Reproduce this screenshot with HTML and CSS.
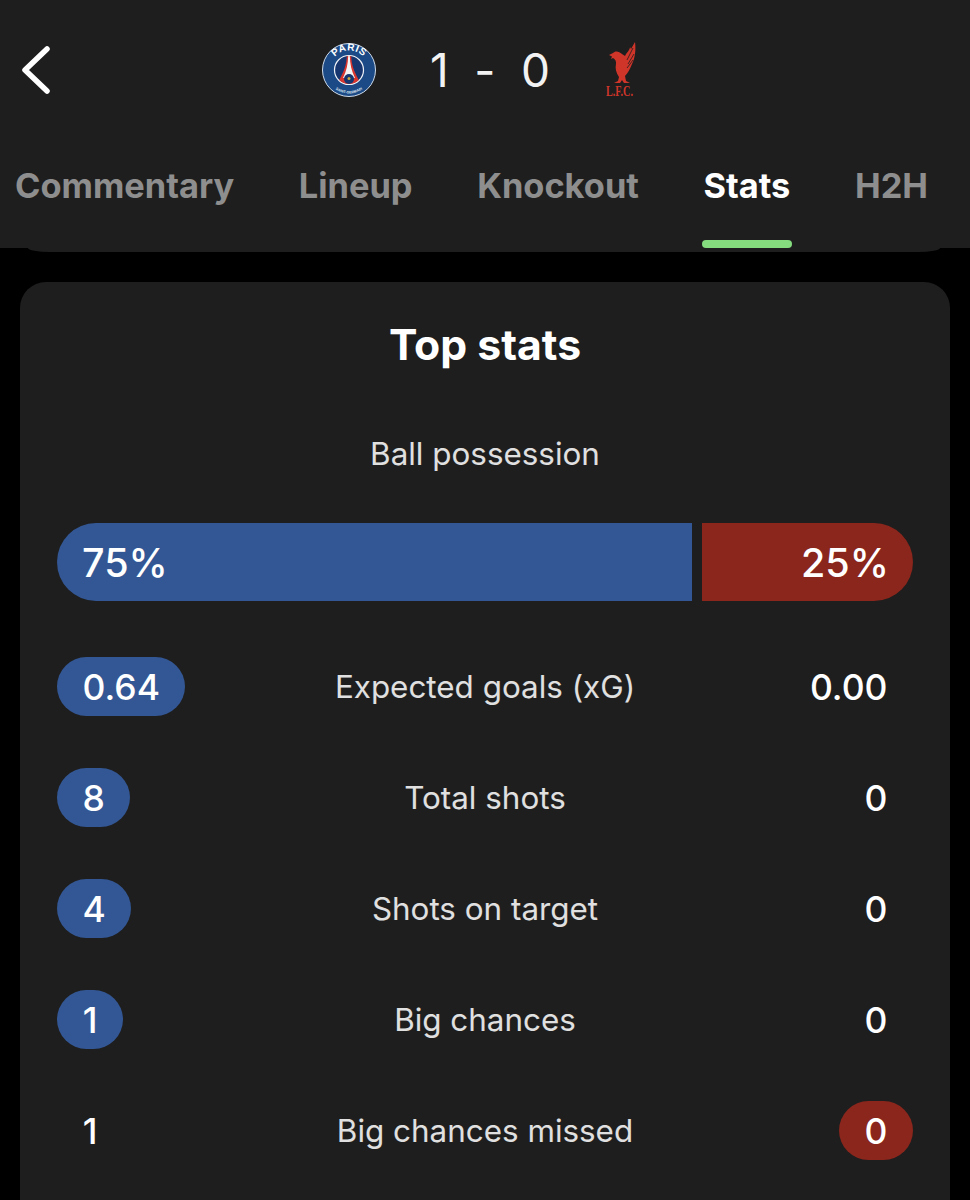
FILE: index.html
```html
<!DOCTYPE html>
<html lang="en">
<head>
<meta charset="utf-8">
<title>PSG 1-0 Liverpool</title>
<link rel="stylesheet" href="styles.css">
</head>
<body>
<header class="header">
  <div class="topbar">
    <svg class="back" width="32" height="48" viewBox="0 0 32 48"><path d="M27 3 L5 24 L27 45" fill="none" stroke="#fff" stroke-width="5.5" stroke-linecap="round" stroke-linejoin="round"/></svg>
    <div class="match">
      <svg class="crest" width="56" height="56" viewBox="0 0 56 56">
        <defs>
          <path id="arc-top" d="M8.500 28A19.500 19.500 0 0 1 47.500 28"/>
          <path id="arc-bottom" d="M4.500 28A23.500 23.500 0 0 0 51.500 28"/>
          <clipPath id="inner"><circle cx="28" cy="28" r="14"/></clipPath>
        </defs>
        <circle cx="28" cy="28" r="26.500" fill="#1c4a86" stroke="#cfdbe9" stroke-width="1"/>
        <circle cx="28" cy="28" r="14.500" fill="#17366f" stroke="#eef1f5" stroke-width="1.200"/>
        <g clip-path="url(#inner)">
          <path d="M25.800 14h4.400c.3 9 2.800 16 9.800 28H16c7-12 9.500-19 9.800-28z" fill="#d8352f"/>
          <path d="M27.200 14h1.600c.2 8 1.800 15 5.200 22h-12c3.400-7 5-14 5.200-22z" fill="#f4f4f4"/>
          <circle cx="28" cy="37" r="5" fill="#17366f"/>
          <circle cx="28" cy="36.500" r="1.500" fill="#c9a63a"/>
        </g>
        <text class="crest-paris"><textPath href="#arc-top" startOffset="50%" text-anchor="middle">PARIS</textPath></text>
        <text class="crest-sub"><textPath href="#arc-bottom" startOffset="50%" text-anchor="middle">SAINT-GERMAIN</textPath></text>
      </svg>
      <div class="score"><span>1</span><span>-</span><span>0</span></div>
      <svg class="crest crest-lfc" width="48" height="66" viewBox="0 0 48 66">
        <path fill="#d0352a" d="M6 15l4-2c2-2.500 6-2 9 1l3 2c2-4 5-6 5-9l1 2 4-7c1 8 0 16-3 22-2 5-4 9-7 12l1 5 4 2h-6l-2-3-2 3h-6l4-2 1-4c-3-4-4-9-3-13 .5-3-1-5-3-6l-2 1 1-2.500z"/>
        <path fill="none" stroke="#1e1e1e" stroke-width=".8" d="M30 8l-6 12M31 14l-6 10M30 20l-6 8"/>
        <text class="lfc" x="3" y="56" textLength="27" lengthAdjust="spacingAndGlyphs">L.F.C.</text>
      </svg>
    </div>
  </div>
  <nav class="tabs">
    <a class="tab">Commentary</a>
    <a class="tab">Lineup</a>
    <a class="tab">Knockout</a>
    <a class="tab tab-active">Stats</a>
    <a class="tab">H2H</a>
  </nav>
</header>
<div class="peek"></div>
<main class="card">
  <h1 class="title">Top stats</h1>
  <p class="poss-label">Ball possession</p>
  <div class="poss">
    <div class="poss-home">75%</div>
    <div class="poss-away">25%</div>
  </div>
  <div class="rows">
    <div class="row"><div class="val"><span class="pill blue">0.64</span></div><div class="label">Expected goals (xG)</div><div class="val right"><span class="pill">0.00</span></div></div>
    <div class="row"><div class="val"><span class="pill blue">8</span></div><div class="label">Total shots</div><div class="val right"><span class="pill">0</span></div></div>
    <div class="row"><div class="val"><span class="pill blue">4</span></div><div class="label">Shots on target</div><div class="val right"><span class="pill">0</span></div></div>
    <div class="row"><div class="val"><span class="pill blue">1</span></div><div class="label">Big chances</div><div class="val right"><span class="pill">0</span></div></div>
    <div class="row"><div class="val"><span class="pill">1</span></div><div class="label">Big chances missed</div><div class="val right"><span class="pill red">0</span></div></div>
  </div>
</main>
</body>
</html>
```

FILE: styles.css
```css
* { box-sizing: border-box; }
html, body { margin: 0; padding: 0; }
body {
  width: 970px;
  height: 1200px;
  overflow: hidden;
  background: #000;
  color: #fff;
  font-family: Inter, "Liberation Sans", sans-serif;
}
.header {
  height: 248px;
  background: #1e1e1e;
  display: flex;
  flex-direction: column;
}
.topbar {
  height: 140px;
  position: relative;
  display: flex;
  align-items: center;
  padding-left: 321px;
}
.back { position: absolute; left: 20px; top: 46px; }
.match {
  display: flex;
  align-items: center;
  height: 140px;
}
.crest { display: block; }
.crest-lfc { margin-top: 6px; }
.score {
  width: 120px;
  margin: 0 53px;
  display: flex;
  justify-content: space-between;
  align-items: center;
  font-size: 46px;
  font-weight: 400;
  color: #f2f2f2;
}
.crest-paris { font: 700 10px "Liberation Sans", sans-serif; fill: #fff; letter-spacing: .5px; }
.crest-sub { font: 700 3.600px "Liberation Sans", sans-serif; fill: #dfe6ef; }
.lfc { font: 700 14px "Liberation Serif", serif; fill: #d0352a; }
.tabs {
  height: 108px;
  padding: 0 0 0 15px;
  display: flex;
  gap: 64.600px;
}
.tab {
  position: relative;
  height: 108px;
  padding-top: 26px;
  font-size: 34.400px;
  line-height: 40px;
  font-weight: 700;
  color: #8e8e8e;
  white-space: nowrap;
}
.tab-active { color: #fff; }
.tab-active::after {
  content: "";
  position: absolute;
  left: -1px;
  right: -2px;
  bottom: 0;
  height: 8px;
  border-radius: 4px;
  background: #84dc7e;
}
.peek {
  height: 4px;
  margin: 0 30px 0 28px;
  background: #1e1e1e;
  border-radius: 0 0 22px 22px / 0 0 4px 4px;
}
.card {
  margin: 30px 20px 0;
  height: 918px;
  padding: 0 37px;
  background: #1e1e1e;
  border-radius: 26px 26px 0 0;
}
.title {
  margin: 0;
  padding-top: 36px;
  height: 130px;
  font-size: 42.700px;
  line-height: 54px;
  font-weight: 700;
  text-align: center;
}
.poss-label {
  margin: 0;
  height: 111px;
  padding-top: 22px;
  font-size: 31.400px;
  line-height: 40px;
  text-align: center;
  color: #e0e0e0;
}
.poss {
  display: flex;
  gap: 10px;
  height: 78px;
  margin-bottom: 56px;
  font-size: 39.500px;
  font-weight: 500;
}
.poss-home, .poss-away {
  display: flex;
  align-items: center;
  padding: 2px 24px 0 25px;
}
.poss-home {
  flex: 0 0 635px;
  background: #335794;
  border-radius: 39px 0 0 39px;
}
.poss-away {
  flex: 1;
  justify-content: flex-end;
  background: #8a261c;
  border-radius: 0 39px 39px 0;
}
.rows {
  display: flex;
  flex-direction: column;
  gap: 52px;
}
.row {
  display: grid;
  grid-template-columns: 1fr 480px 1fr;
  align-items: center;
  height: 59px;
}
.val { display: flex; }
.right { justify-content: flex-end; }
.pill {
  display: inline-flex;
  align-items: center;
  justify-content: center;
  min-width: 66px;
  height: 59px;
  padding: 1px 25.500px 0;
  border-radius: 30px;
  font-size: 35.500px;
  font-weight: 500;
}
.blue { background: #335794; }
.red { background: #8a261c; }
.label {
  text-align: center;
  font-size: 31.400px;
  color: #e0e0e0;
}
```
